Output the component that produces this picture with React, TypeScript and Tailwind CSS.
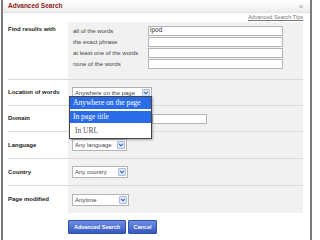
const Arrow = () => (
  <span className="flex h-[8px] w-[8px] items-center justify-center rounded-[1px] border border-[#a9bde0] bg-[#dde8f8]">
    <svg viewBox="0 0 8 8" className="h-[6px] w-[6px]">
      <path d="M1.5 2.5 L4 5 L6.5 2.5" fill="none" stroke="#3c5ea8" strokeWidth={1.4} />
    </svg>
  </span>
)

const Select = ({ value, width }: { value: string; width: string }) => (
  <div
    className={`flex h-[12px] ${width} items-center justify-between border border-[#b4b4b4] bg-white pl-[2px] pr-[1px] text-[6px] text-[#444]`}
  >
    <span className="leading-none">{value}</span>
    <Arrow />
  </div>
)

const Section = ({
  label,
  children,
  height,
  last,
}: {
  label: string
  children: React.ReactNode
  height: string
  last?: boolean
}) => (
  <div className={`flex ${height} ${last ? '' : 'border-b border-[#d9d9d9]'}`}>
    <div className="flex w-[60px] items-center text-[6px] font-bold text-[#222]">{label}</div>
    <div className="flex flex-1 items-center bg-[#f1f1f1] pl-[4px]">{children}</div>
  </div>
)

const App = () => {
  const words = ['all of the words', 'the exact phrase', 'at least one of the words', 'none of the words']

  return (
    <div
      className="h-[240px] w-[320px] bg-white pl-[1px]"
      style={{ fontFamily: '"Liberation Sans", Arial, sans-serif' }}
    >
      <div className="relative flex h-full w-[311px] flex-col border-x-2 border-[#7a7a7a]">
        {/* title bar */}
        <div className="flex h-[13px] items-center justify-between border-b border-[#e2e2e2] bg-gradient-to-b from-white to-[#ededed] pl-[5px] pr-[7px]">
          <span className="text-[6.5px] font-bold text-[#8e1c1c]">Advanced Search</span>
          <span className="text-[7px] leading-none text-[#999]">×</span>
        </div>

        <div className="flex flex-1 flex-col pl-[5px] pr-[7px]">
          <div className="flex h-[9px] items-center justify-end">
            <span className="text-[5.5px] text-[#777] underline">Advanced Search Tips</span>
          </div>

          {/* find results */}
          <div className="flex h-[58px] border-b border-[#d9d9d9]">
            <div className="w-[60px] pt-[3px] text-[6px] font-bold text-[#222]">Find results with</div>
            <div className="flex flex-1 flex-col gap-[1px] bg-[#f1f1f1] pl-[5px] pt-[4px]">
              {words.map((w, i) => (
                <div key={w} className="flex h-[10px] items-center">
                  <span className="w-[75px] text-[6px] text-[#444]">{w}</span>
                  <div className="flex h-[10px] w-[135px] items-start border border-[#b4b4b4] bg-white pl-[1px] text-[6.5px] leading-none text-[#333]">
                    {i === 0 ? 'ipod' : ''}
                  </div>
                </div>
              ))}
            </div>
          </div>

          <Section label="Location of words" height="h-[26px]">
            <Select value="Anywhere on the page" width="w-[80px]" />
          </Section>
          <Section label="Domain" height="h-[26px]">
            <div className="ml-[80px] h-[10px] w-[55px] border border-[#b4b4b4] bg-white" />
          </Section>
          <Section label="Language" height="h-[27px]">
            <Select value="Any language" width="w-[55px]" />
          </Section>
          <Section label="Country" height="h-[27px]">
            <Select value="Any country" width="w-[56px]" />
          </Section>
          <Section label="Page modified" height="h-[27px]" last>
            <Select value="Anytime" width="w-[57px]" />
          </Section>

          <div className="ml-[60px] mt-[7px] flex gap-[2px]">
            <button className="h-[14px] w-[58px] rounded-[1px] border border-[#2f4fae] bg-gradient-to-b from-[#6f8fe3] to-[#3557c0] text-[5.5px] font-bold text-white">
              Advanced Search
            </button>
            <button className="h-[14px] w-[29px] rounded-[1px] border border-[#2f4fae] bg-gradient-to-b from-[#6f8fe3] to-[#3557c0] text-[5.5px] font-bold text-white">
              Cancel
            </button>
          </div>
        </div>

        {/* open dropdown list */}
        <div
          className="absolute left-[66px] top-[96px] flex w-[83px] flex-col border border-[#444] bg-white text-[7.5px] shadow-[1px_1px_2px_rgba(0,0,0,0.3)]"
          style={{ fontFamily: '"Liberation Serif", "Times New Roman", serif' }}
        >
          <div className="flex h-[12px] items-center bg-[#2a6ce8] pl-[3px] text-white">Anywhere on the page</div>
          <div className="h-[2px] bg-white" />
          <div className="flex h-[12px] items-center bg-[#2a6ce8] pl-[3px] text-white">In page title</div>
          <div className="flex h-[15px] items-center pl-[5px] text-[#555]">In URL</div>
        </div>
      </div>
    </div>
  )
}

export default App
